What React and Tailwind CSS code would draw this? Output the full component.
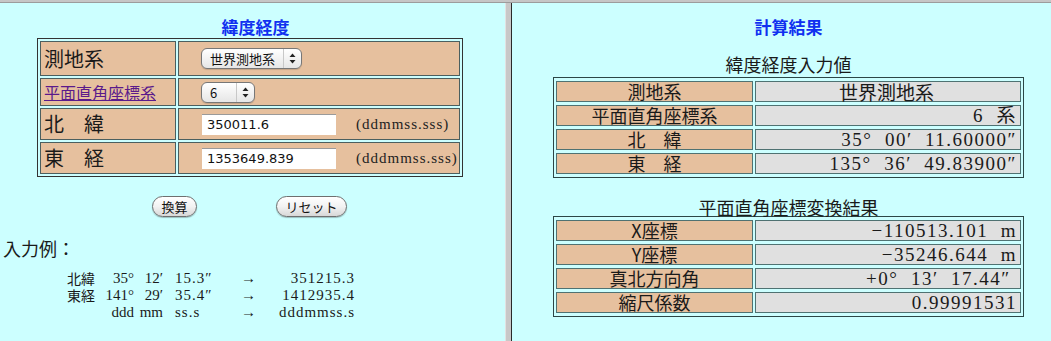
import React from "react";

const JP = { fontFamily: '"Noto Sans CJK JP", "Noto Sans", sans-serif' };
const SERIF = { fontFamily: '"Liberation Serif", "Noto Sans CJK JP", serif' };
const UI = { fontFamily: '"DejaVu Sans", "Noto Sans CJK JP", sans-serif' };

function Arrows() {
  return (
    <svg width="7" height="11" viewBox="0 0 7 11" className="block">
      <path d="M3.5 0.5 L6.5 4 L0.5 4 Z" fill="#222" />
      <path d="M3.5 10.5 L6.5 7 L0.5 7 Z" fill="#222" />
    </svg>
  );
}

function Select({ label, w }) {
  return (
    <div
      className={`flex items-center h-[21px] rounded-[6px] border border-[#777] bg-gradient-to-b from-white to-[#e6e6e6] shadow-[0_1px_1px_rgba(0,0,0,0.15)] ${w}`}
      style={UI}
    >
      <span className="flex-1 pl-[8px] text-[13px] leading-none text-[#111]" style={JP}>
        {label}
      </span>
      <span className="h-full border-l border-[#c8c8c8] w-[18px] flex items-center justify-center">
        <Arrows />
      </span>
    </div>
  );
}

function Btn({ children, w }) {
  return (
    <div
      className={`h-[21px] ${w} rounded-full border border-[#6f6f6f] bg-gradient-to-b from-white via-[#f2f2f2] to-[#d8d8d8] shadow-[0_1px_1px_rgba(0,0,0,0.25)] flex items-center justify-center text-[13px] text-[#111]`}
      style={JP}
    >
      {children}
    </div>
  );
}

function Col({ w, cls, style, lines }) {
  return (
    <div className={`${w} ${cls}`} style={style}>
      {lines.map((l, i) => (
        <React.Fragment key={i}>
          {l}
          {i < lines.length - 1 && <br />}
        </React.Fragment>
      ))}
    </div>
  );
}

function LeftFrame() {
  const labelCell =
    "bg-[#e6c09e] border border-[#4b5f5f] pl-[3px] text-[#1a1a1a] align-middle w-[136px]";
  const valueCell = "bg-[#e6c09e] border border-[#4b5f5f] align-middle";
  return (
    <div className="w-[505px] shrink-0 bg-[#ccffff] h-full">
      <div
        className="mt-[14px] text-center text-[17px] leading-[20px] font-bold text-[#1030f0] pl-[6px]"
        style={JP}
      >
        緯度経度
      </div>
      <table className="ml-[37px] mt-[1px] w-[426px] border border-[#333] border-separate border-spacing-[2px]">
        <tbody>
          <tr className="h-[35px]">
            <td className={`${labelCell} text-[20px]`} style={JP}>測地系</td>
            <td className={`${valueCell} pl-[22px]`}>
              <Select label="世界測地系" w="w-[101px]" />
            </td>
          </tr>
          <tr className="h-[28px]">
            <td className={`${labelCell} text-[16px]`} style={JP}>
              <span className="text-[#5a1a8b] underline decoration-[#5a1a8b]">平面直角座標系</span>
            </td>
            <td className={`${valueCell} pl-[22px]`}>
              <Select label="6" w="w-[54px]" />
            </td>
          </tr>
          <tr className="h-[30px]">
            <td className={`${labelCell} text-[20px]`} style={JP}>北　緯</td>
            <td className={`${valueCell} pl-[23px]`}>
              <div className="flex items-center">
                <div
                  className="w-[134px] h-[21px] bg-white border-t border-[#9a9a9a] pl-[5px] text-[13px] leading-[20px] text-[#111]"
                  style={UI}
                >
                  350011.6
                </div>
                <span className="ml-[20px] text-[15px] tracking-[1px] text-[#222]" style={SERIF}>
                  (ddmmss.sss)
                </span>
              </div>
            </td>
          </tr>
          <tr className="h-[30px]">
            <td className={`${labelCell} text-[20px]`} style={JP}>東　経</td>
            <td className={`${valueCell} pl-[23px]`}>
              <div className="flex items-center">
                <div
                  className="w-[134px] h-[21px] bg-white border-t border-[#9a9a9a] pl-[5px] text-[13px] leading-[20px] text-[#111]"
                  style={UI}
                >
                  1353649.839
                </div>
                <span className="ml-[20px] text-[15px] tracking-[1px] text-[#222]" style={SERIF}>
                  (dddmmss.sss)
                </span>
              </div>
            </td>
          </tr>
        </tbody>
      </table>
      <div className="flex mt-[19px] pl-[152px]">
        <Btn w="w-[45px]">換算</Btn>
        <div className="w-[79px]" />
        <Btn w="w-[71px]">リセット</Btn>
      </div>
      <div className="mt-[20px] pl-[3px] text-[18px] leading-[22px] text-[#1a1a1a]" style={JP}>
        入力例：
      </div>
      <div
        className="mt-[11px] flex pl-[67px] text-[15px] leading-[17px] text-[#1a1a1a] whitespace-pre"
        style={SERIF}
      >
        <Col w="w-[34px]" cls="text-[14px] leading-[17px]" style={JP} lines={["北緯", "東経"]} />
        <Col w="w-[33px]" cls="text-right" lines={["35°", "141°", "ddd"]} />
        <Col w="w-[29px]" cls="text-right" lines={["12′", "29′", "mm"]} />
        <Col w="w-[78px]" cls="pl-[12px] tracking-[1px]" lines={["15.3″", "35.4″", "ss.s"]} />
        <Col w="w-[15px]" cls="" lines={["→", "→", "→"]} />
        <Col w="w-[99px]" cls="text-right tracking-[1px]" lines={["351215.3", "1412935.4", "dddmmss.s"]} />
      </div>
    </div>
  );
}

function ResultTable({ rows, className }) {
  const lc =
    "bg-[#e6c09e] border border-[#4f7272] text-center text-[18px] leading-[19px] text-[#1a1a1a] w-[197px] p-0";
  const vc =
    "bg-[#e0e0e0] border border-[#4f7272] text-[19px] leading-[19px] text-[#1a1a1a] p-0 pr-[3px] whitespace-pre";
  return (
    <table
      className={`w-[471px] border border-[#2c4646] border-separate border-spacing-x-[2px] border-spacing-y-[3px] ${className}`}
    >
      <tbody>
        {rows.map(([l, v, center], i) => (
          <tr key={i} className="h-[21px]">
            <td className={lc} style={JP}>{l}</td>
            <td
              className={`${vc} ${center ? "text-center text-[18px]" : "text-right tracking-[1.5px]"}`}
              style={center ? JP : SERIF}
            >
              {v}
            </td>
          </tr>
        ))}
      </tbody>
    </table>
  );
}

function RightFrame() {
  return (
    <div className="flex-1 bg-[#ccffff] h-full">
      <div className="ml-[41px] w-[471px]">
        <div
          className="mt-[14px] text-center text-[17px] leading-[20px] font-bold text-[#1030f0]"
          style={JP}
        >
          計算結果
        </div>
        <div className="mt-[16px] text-center text-[18px] leading-[22px] text-[#1a1a1a]" style={JP}>
          緯度経度入力値
        </div>
        <ResultTable
          className="mt-[2px]"
          rows={[
            ["測地系", "世界測地系", true],
            ["平面直角座標系", "6  系"],
            ["北　緯", "35°  00′  11.60000″"],
            ["東　経", "135°  36′  49.83900″"],
          ]}
        />
        <div className="mt-[19px] text-center text-[18px] leading-[20px] text-[#1a1a1a]" style={JP}>
          平面直角座標変換結果
        </div>
        <ResultTable
          className="mt-[-1px]"
          rows={[
            ["X座標", "−110513.101  m"],
            ["Y座標", "−35246.644  m"],
            ["真北方向角", "+0°  13′  17.44″ "],
            ["縮尺係数", "0.99991531"],
          ]}
        />
      </div>
    </div>
  );
}

export default function App() {
  return (
    <div className="w-[1051px] h-[341px] overflow-hidden flex flex-col bg-[#ccffff]">
      <div className="h-[2px] bg-[#c6c6c6] shrink-0" />
      <div className="h-[1px] bg-[#9c9c9c] shrink-0" />
      <div className="flex flex-1 min-h-0">
        <LeftFrame />
        <div className="w-[6px] shrink-0 bg-[#c8c8c8] border-l border-[#e2e2e2]" />
        <div className="w-[1px] shrink-0 bg-[#2a2a2a]" />
        <RightFrame />
      </div>
    </div>
  );
}
